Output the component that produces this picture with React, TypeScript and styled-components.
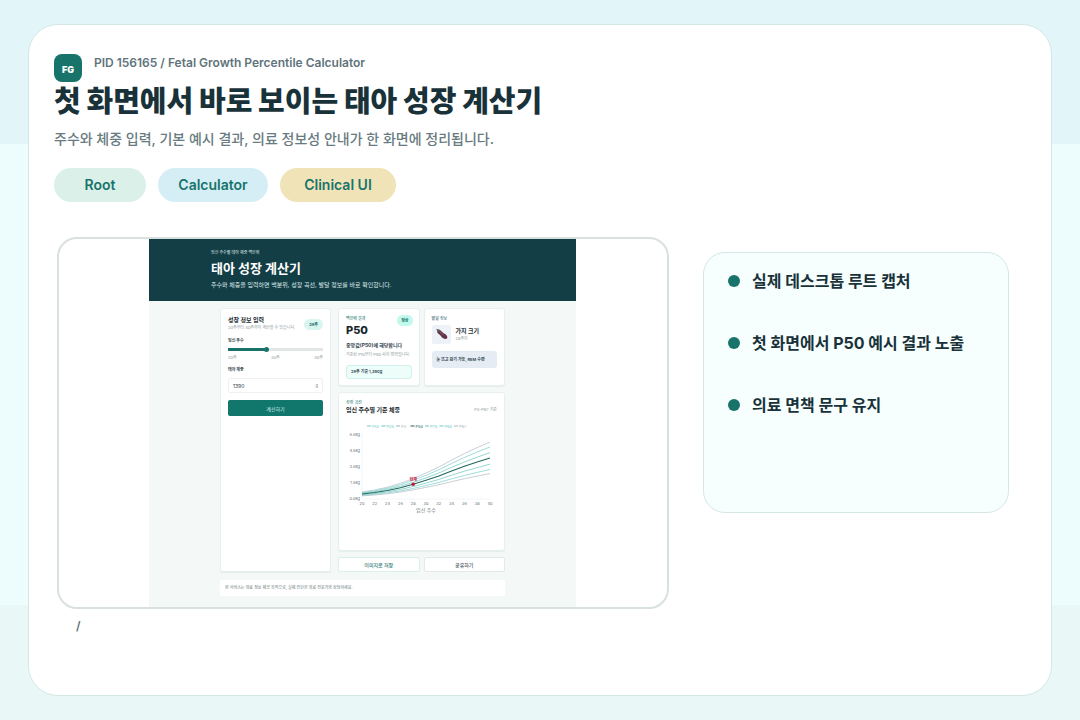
import React from "react";
import styled, { createGlobalStyle } from "styled-components";

const GlobalStyle = createGlobalStyle`
  * { box-sizing: border-box; }
  body {
    margin: 0;
    font-family: Inter, "Noto Sans CJK KR", sans-serif;
    color: #19323a;
    background: #edfcfc;
  }
  h1, h2, h3, p, ul { margin: 0; padding: 0; }
  button, input { font-family: inherit; }
`;

const Page = styled.div`
  min-height: 100vh;
  padding: 24px 28px;
  display: flex;
  background: linear-gradient(#e2f5f8 20%, #edfcfc 20%, #edfcfc 84%, #e9f7f7 84%);
`;

const Board = styled.main`
  flex: 1;
  padding: 29px 25px;
  background: #fff;
  border: 1px solid #d5e7e5;
  border-radius: 30px;
`;

const Brand = styled.div`
  display: flex;
  gap: 12px;
  height: 28px;
`;

const Logo = styled.span`
  width: 28px;
  height: 28px;
  padding-top: 4px;
  border-radius: 8px;
  background: #18746b;
  color: #fff;
  font-size: 9px;
  font-weight: 900;
  line-height: 24px;
  text-align: center;
`;

const ProjectName = styled.p`
  color: #5f747b;
  font-size: 12px;
  font-weight: 600;
  line-height: 18px;
`;

const Title = styled.h1`
  color: #19323a;
  font-size: 29px;
  font-weight: 900;
  line-height: 40px;
`;

const Subtitle = styled.p`
  margin-top: 6px;
  color: #687b80;
  font-size: 14px;
  font-weight: 500;
  line-height: 22px;
`;

const Tags = styled.ul`
  display: flex;
  gap: 12px;
  margin-top: 18px;
  list-style: none;
`;

const Tag = styled.li<{ $tone: string; $width: number }>`
  padding: 0 20px;
  min-width: ${(p) => p.$width}px;
  border-radius: 17px;
  background: ${(p) => p.$tone};
  color: #18746b;
  font-size: 14px;
  font-weight: 600;
  line-height: 34px;
  text-align: center;
`;

const Showcase = styled.div`
  display: grid;
  grid-template-columns: 2fr 1fr;
  gap: 34px;
  align-items: start;
  margin-top: 35px;
  padding: 0 17px 0 3px;
`;

const Frame = styled.div`
  display: flex;
  padding: 0 91px 0 90px;
  border: 2px solid #d8e1df;
  border-radius: 20px;
  overflow: hidden;
`;

const RoutePath = styled.p`
  padding: 8px 19px;
  color: #5f6f72;
  font-size: 12px;
  font-weight: 600;
  line-height: 18px;
`;

const Notes = styled.ul`
  min-height: 261px;
  margin-top: 15px;
  padding: 16px 24px;
  display: flex;
  flex-direction: column;
  gap: 38px;
  list-style: none;
  background: #f6fffe;
  border: 1px solid #d5e7e5;
  border-radius: 22px;
`;

const Note = styled.li`
  display: flex;
  align-items: center;
  gap: 12px;
  font-size: 16px;
  font-weight: 700;
  line-height: 24px;
  white-space: nowrap;

  &::before {
    content: "";
    width: 12px;
    height: 12px;
    border-radius: 50%;
    background: #18746b;
  }
`;

/* Calculator preview */

const Preview = styled.section`
  flex: 1;
  min-width: 0;
  background: #f4f9f8;
`;

const PreviewHeader = styled.header`
  height: 62px;
  padding: 11px 62px;
  background: #143e45;
  color: #fff;
  white-space: nowrap;
`;

const Eyebrow = styled.p<{ $color?: string }>`
  color: ${(p) => p.$color || "#2d7a74"};
  font-size: 4px;
  font-weight: 500;
  line-height: 6px;
`;

const PreviewTitle = styled.h2`
  font-size: 13px;
  font-weight: 700;
  line-height: 24px;
`;

const PreviewLead = styled.p`
  color: #dcebec;
  font-size: 6px;
  line-height: 10px;
`;

const PreviewBody = styled.div`
  display: grid;
  grid-template-columns: 111px 1fr;
  column-gap: 7px;
  row-gap: 8px;
  padding: 7px 71px 11px 71px;
`;

const Card = styled.section`
  position: relative;
  padding: 7px;
  background: #fff;
  border: 1px solid #e8f0ef;
  border-radius: 3px;
  box-shadow: 0 1px 1px #e4eceb;
  white-space: nowrap;
`;

const CardHead = styled.div`
  display: flex;
  justify-content: space-between;
  align-items: center;
`;

const CardTitle = styled.h3`
  color: #1c2c31;
  font-size: 6px;
  font-weight: 700;
  line-height: 8px;
`;

const Small = styled.p`
  color: #8c999c;
  font-size: 4px;
  line-height: 8px;
`;

const Badge = styled.span`
  padding: 0 5px;
  border-radius: 6px;
  background: #d9f5f0;
  color: #176c65;
  font-size: 4px;
  font-weight: 700;
  line-height: 11px;
`;

const Label = styled.label`
  display: block;
  margin-top: 6px;
  color: #39494d;
  font-size: 4px;
  font-weight: 700;
  line-height: 6px;
`;

const Range = styled.input`
  appearance: none;
  display: block;
  width: 100%;
  height: 5px;
  margin: 3px 0 3px;
  background: linear-gradient(90deg, #18746b 40%, #e3e6e7 40%) center / 100% 3px no-repeat;

  &::-webkit-slider-thumb {
    appearance: none;
    width: 5px;
    height: 5px;
    border-radius: 50%;
    background: #18746b;
  }
`;

const Scale = styled.div`
  display: flex;
  justify-content: space-between;
  color: #8c999c;
  font-size: 4px;
  line-height: 6px;
`;

const Field = styled.div`
  display: flex;
  align-items: center;
  height: 15px;
  margin-top: 5px;
  padding: 0 4px;
  border: 1px solid #edf1f1;
  border-radius: 2px;
  color: #68777b;
  font-size: 4px;
`;

const WeightInput = styled.input`
  flex: 1;
  min-width: 0;
  padding: 0;
  border: 0;
  background: none;
  color: #303d41;
  font-size: 5px;
`;

const PrimaryButton = styled.button`
  display: block;
  width: 100%;
  height: 16px;
  margin-top: 7px;
  padding: 0;
  border: 0;
  border-radius: 2px;
  background: #11776d;
  color: #d9f0ed;
  font-size: 5px;
`;

const Results = styled.div`
  display: grid;
  grid-template-columns: 1fr 1fr;
  grid-template-rows: 78px 159px 15px;
  column-gap: 4px;
  row-gap: 6px;
`;

const Score = styled.p`
  color: #17272c;
  font-size: 11px;
  font-weight: 800;
  line-height: 16px;
`;

const Verdict = styled.p`
  margin-top: 2px;
  color: #33444d;
  font-size: 5px;
  font-weight: 700;
  line-height: 10px;
`;

const Callout = styled.p<{ $blue?: boolean }>`
  margin-top: ${(p) => (p.$blue ? 7 : 5)}px;
  padding: 0 4px;
  border: 1px solid ${(p) => (p.$blue ? "#e3ebf3" : "#cff2eb")};
  border-radius: 3px;
  background: ${(p) => (p.$blue ? "#e5ecf3" : "#edfdfa")};
  color: #2f4650;
  font-size: 4px;
  font-weight: 600;
  line-height: ${(p) => (p.$blue ? 15 : 12)}px;
`;

const Hint = styled(Small)`
  line-height: 10px;
`;

const StatusBadge = styled(Badge)`
  position: absolute;
  top: 6px;
  right: 6px;
  padding: 0 4px;
  background: #c2f9ed;
`;

const Fruit = styled.div`
  display: flex;
  align-items: center;
  gap: 5px;
  margin-top: 3px;
`;

const FruitIcon = styled.span`
  display: flex;
  padding: 3px;
  border-radius: 2px;
  background: #eef1f7;
`;

const ChartCard = styled(Card)`
  grid-column: 1 / -1;
`;

const Chart = styled.svg`
  display: block;
  width: 100%;
  height: auto;
  margin-top: 10px;
`;

const GhostButton = styled.button<{ $accent?: boolean }>`
  padding: 0;
  border: 1px solid ${(p) => (p.$accent ? "#daf0ec" : "#e3eaea")};
  border-radius: 2px;
  background: #fff;
  color: ${(p) => (p.$accent ? "#2d7a74" : "#4e5d66")};
  font-size: 5px;
  font-weight: 500;
  line-height: 12px;
`;

const Disclaimer = styled.p`
  grid-column: 1 / -1;
  padding: 0 5px;
  border-radius: 2px;
  background: #fff;
  color: #66767a;
  font-size: 4px;
  line-height: 16px;
`;

const yTicks = ["6.0kg", "4.5kg", "3.0kg", "1.5kg", "0.0kg"];
const xTicks = [20, 22, 24, 26, 28, 30, 32, 34, 36, 38, 40];
const legend = [
  { name: "P10", color: "#6fc9d0" },
  { name: "P25", color: "#66c5b7" },
  { name: "P3", color: "#a9b3ba" },
  { name: "P50", color: "#25645f" },
  { name: "P75", color: "#66c5b7" },
  { name: "P90", color: "#6fc9d0" },
  { name: "P97", color: "#a9b3ba" },
];

/* Height of the median above the axis at each tick, in chart units */
const median = [5, 6.5, 8.5, 11.3, 14.7, 18.7, 23, 28, 32.7, 37, 41];
const curves = [
  { ratio: 1.39, color: "#b0bac4" },
  { ratio: 1.27, color: "#75cdd0" },
  { ratio: 1.13, color: "#66c5b7" },
  { ratio: 0.85, color: "#66c5b7" },
  { ratio: 0.72, color: "#75cdd0" },
  { ratio: 0.62, color: "#b0bac4" },
  { ratio: 1, color: "#21675f" },
];

const linePoints = (ratio: number) =>
  median.map((value, i) => `${16 + i * 12.8},${75 - value * ratio}`).join(" ");

function GrowthChart() {
  return (
    <Chart viewBox="0 0 151 92" role="img" aria-label="임신 주수별 기준 체중">
      {legend.map((item, i) => (
        <g key={item.name}>
          <path d={`M${21 + i * 14.5} 2h4`} stroke={item.color} strokeWidth="1" />
          <text x={26 + i * 14.5} y="3.5" fontSize="4" fill={item.color}>{item.name}</text>
        </g>
      ))}
      {yTicks.map((tick, i) => (
        <text key={tick} x="14" y={12 + i * 16} fontSize="4" fill="#657276" textAnchor="end">{tick}</text>
      ))}
      <path d="M16 10V75H144" fill="none" stroke="#e4eaec" strokeWidth=".5" />
      {curves.map((curve) => (
        <polyline
          key={curve.ratio}
          points={linePoints(curve.ratio)}
          fill="none"
          stroke={curve.color}
          strokeWidth={curve.ratio === 1 ? 1.1 : 0.7}
          strokeLinejoin="round"
        />
      ))}
      <circle cx="67.2" cy="60.3" r="1.8" fill="#c5163e" />
      <text x="67.2" y="56.5" fontSize="4" fontWeight="700" fill="#c5163e" textAnchor="middle">현재</text>
      {xTicks.map((tick, i) => (
        <text key={tick} x={16 + i * 12.8} y="80.500" fontSize="4" fill="#657276" textAnchor="middle">{tick}</text>
      ))}
      <text x="80" y="87.500" fontSize="5" fill="#657276" textAnchor="middle">임신 주수</text>
    </Chart>
  );
}

function Eggplant() {
  return (
    <svg width="13" height="13" viewBox="0 0 13 13" aria-hidden="true">
      <path d="M2.7 2.2C1.4 3.4 2.4 5.1 4 6.2s2.100 2.500 3.700 3.700c1.800 1.300 3.900 1.500 4.500.2.700-1.500-.8-3.500-2.600-4.400C7.800 4.800 6.700 3.300 5.300 2.200 4.300 1.500 3.400 1.500 2.700 2.200Z" fill="#5f3448" />
      <path d="M4.200 3.200c1.600 1.200 2.500 2.700 4.300 3.700" fill="none" stroke="#94657c" strokeWidth=".8" />
      <path d="M1 1.200 2.600 1l2.300.8-1.100.5-.5 1.200-1 .9-.2-1.900Z" fill="#68755a" />
    </svg>
  );
}

function CalculatorPreview() {
  return (
    <Preview>
      <PreviewHeader>
        <Eyebrow $color="#c6dcdd">임신 주수별 태아 체중 백분위</Eyebrow>
        <PreviewTitle>태아 성장 계산기</PreviewTitle>
        <PreviewLead>주수와 체중을 입력하면 백분위, 성장 곡선, 발달 정보를 바로 확인합니다.</PreviewLead>
      </PreviewHeader>
      <PreviewBody>
        <Card>
          <CardHead>
            <div>
              <CardTitle>성장 정보 입력</CardTitle>
              <Small>20주부터 40주까지 계산할 수 있습니다.</Small>
            </div>
            <Badge>28주</Badge>
          </CardHead>
          <Label htmlFor="weeks">임신 주수</Label>
          <Range id="weeks" type="range" min={20} max={40} defaultValue={28} />
          <Scale>
            <span>20주</span>
            <span>30주</span>
            <span>40주</span>
          </Scale>
          <Label htmlFor="weight">태아 체중</Label>
          <Field>
            <WeightInput id="weight" type="text" defaultValue="1390" />
            <span>g</span>
          </Field>
          <PrimaryButton type="button">계산하기</PrimaryButton>
        </Card>
        <Results>
          <Card>
            <StatusBadge>정상</StatusBadge>
            <Eyebrow>백분위 결과</Eyebrow>
            <Score>P50</Score>
            <Verdict>중앙값(P50)에 해당합니다</Verdict>
            <Hint>기준상 P10부터 P90 사이 범위입니다.</Hint>
            <Callout>28주 기준 1,390g</Callout>
          </Card>
          <Card>
            <Eyebrow $color="#4c6f82">발달 정보</Eyebrow>
            <Fruit>
              <FruitIcon>
                <Eggplant />
              </FruitIcon>
              <div>
                <CardTitle>가지 크기</CardTitle>
                <Small>28주차</Small>
              </div>
            </Fruit>
            <Callout $blue>눈 뜨고 감기 가능, REM 수면</Callout>
          </Card>
          <ChartCard>
            <Eyebrow>성장 곡선</Eyebrow>
            <CardHead>
              <CardTitle>임신 주수별 기준 체중</CardTitle>
              <Small>P3–P97 기준</Small>
            </CardHead>
            <GrowthChart />
          </ChartCard>
          <GhostButton type="button" $accent>이미지로 저장</GhostButton>
          <GhostButton type="button">공유하기</GhostButton>
        </Results>
        <Disclaimer>본 서비스는 의료 정보 제공 목적으로, 실제 진단은 의료 전문가와 상담하세요.</Disclaimer>
      </PreviewBody>
    </Preview>
  );
}

export default function App() {
  return (
    <>
      <GlobalStyle />
      <Page lang="ko">
        <Board>
          <Brand>
            <Logo>FG</Logo>
            <ProjectName>PID 156165 / Fetal Growth Percentile Calculator</ProjectName>
          </Brand>
          <Title>첫 화면에서 바로 보이는 태아 성장 계산기</Title>
          <Subtitle>주수와 체중 입력, 기본 예시 결과, 의료 정보성 안내가 한 화면에 정리됩니다.</Subtitle>
          <Tags>
            <Tag $tone="#daf0e9" $width={92}>Root</Tag>
            <Tag $tone="#d5eef6" $width={110}>Calculator</Tag>
            <Tag $tone="#f0e3b8" $width={116}>Clinical UI</Tag>
          </Tags>
          <Showcase>
            <div>
              <Frame>
                <CalculatorPreview />
              </Frame>
              <RoutePath>/</RoutePath>
            </div>
            <Notes>
              <Note>실제 데스크톱 루트 캡처</Note>
              <Note>첫 화면에서 P50 예시 결과 노출</Note>
              <Note>의료 면책 문구 유지</Note>
            </Notes>
          </Showcase>
        </Board>
      </Page>
    </>
  );
}
